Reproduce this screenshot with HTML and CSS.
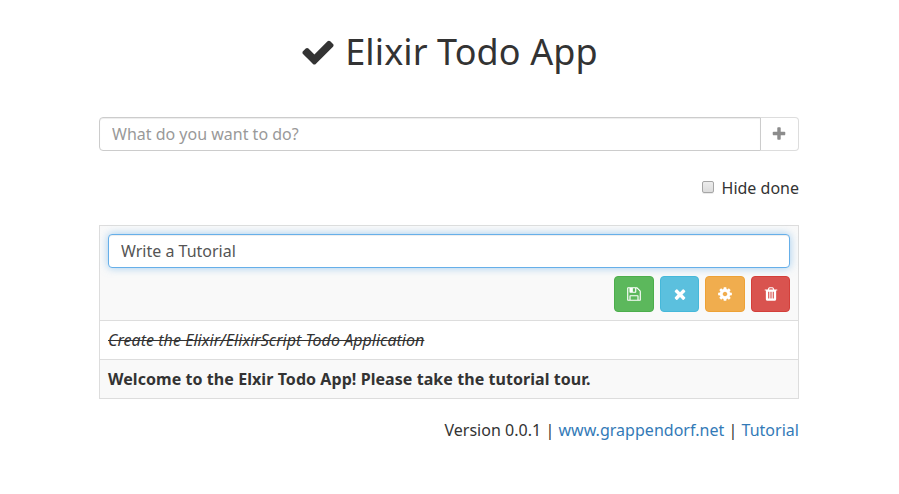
FILE: index.html
```html
<!DOCTYPE html>
<html lang="en">
<head>
<meta charset="utf-8">
<title>Elixir Todo App</title>
<link rel="stylesheet" href="styles.css">
</head>
<body>
<main class="container">
  <h1 class="title">
    <svg class="title-icon" viewBox="0 0 1792 1792"><path d="M1671 566q0 40-28 68l-724 724-136 136q-28 28-68 28t-68-28l-136-136-362-362q-28-28-28-68t28-68l136-136q28-28 68-28t68 28l294 295 656-657q28-28 68-28t68 28l136 136q28 28 28 68z"/></svg>
    <span>Elixir Todo App</span>
  </h1>
  <form class="new-todo">
    <input class="field new-field" type="text" placeholder="What do you want to do?">
    <button class="add" type="button" aria-label="Add"><svg class="icon" viewBox="0 0 1792 1792"><path d="M1600 736v192q0 40-28 68t-68 28h-416v416q0 40-28 68t-68 28h-192q-40 0-68-28t-28-68v-416h-416q-40 0-68-28t-28-68v-192q0-40 28-68t68-28h416v-416q0-40 28-68t68-28h192q40 0 68 28t28 68v416h416q40 0 68 28t28 68z"/></svg></button>
  </form>
  <label class="filter"><input class="check" type="checkbox"><span>Hide done</span></label>
  <ul class="todos">
    <li class="todo editing">
      <input class="field edit-field" type="text" value="Write a Tutorial">
      <div class="actions">
        <button class="btn save" type="button" aria-label="Save"><svg class="icon" viewBox="0 0 1792 1792"><path d="M512 1536h768v-384h-768v384zm896 0h128v-896q0-14-10-38.5t-20-34.5l-281-281q-10-10-34-20t-39-10v416q0 40-28 68t-68 28h-576q-40 0-68-28t-28-68v-416h-128v1280h128v-416q0-40 28-68t68-28h832q40 0 68 28t28 68v416zm-384-928v-320q0-13-9.5-22.5t-22.5-9.5h-192q-13 0-22.5 9.5t-9.5 22.5v320q0 13 9.5 22.5t22.5 9.5h192q13 0 22.5-9.5t9.5-22.5zm640 32v928q0 40-28 68t-68 28h-1344q-40 0-68-28t-28-68v-1344q0-40 28-68t68-28h928q40 0 88 20t76 48l280 280q28 28 48 76t20 88z"/></svg></button>
        <button class="btn cancel" type="button" aria-label="Cancel"><svg class="icon" viewBox="0 0 1792 1792"><path d="M1490 1322q0 40-28 68l-136 136q-28 28-68 28t-68-28l-294-294-294 294q-28 28-68 28t-68-28l-136-136q-28-28-28-68t28-68l294-294-294-294q-28-28-28-68t28-68l136-136q28-28 68-28t68 28l294 294 294-294q28-28 68-28t68 28l136 136q28 28 28 68t-28 68l-294 294 294 294q28 28 28 68z"/></svg></button>
        <button class="btn settings" type="button" aria-label="Settings"><svg class="icon" viewBox="0 0 1792 1792"><path d="M1152 896q0-106-75-181t-181-75-181 75-75 181 75 181 181 75 181-75 75-181zm512-109v222q0 12-8 23t-20 13l-185 28q-19 54-39 91 35 50 107 138 10 12 10 25t-9 23q-27 37-99 108t-94 71q-12 0-26-9l-138-108q-44 23-91 38-16 136-29 186-7 28-36 28h-222q-14 0-24.500-8.500t-11.500-21.500l-28-184q-49-16-90-37l-141 107q-10 9-25 9-14 0-25-11-126-114-165-168-7-10-7-23 0-12 8-23 15-21 51-66.500t54-70.500q-27-50-41-99l-183-27q-13-2-21-12.500t-8-23.500v-222q0-12 8-23t19-13l186-28q14-46 39-92-40-57-107-138-10-12-10-24 0-10 9-23 26-36 98.500-107.500t94.500-71.500q13 0 26 10l138 107q44-23 91-38 16-136 29-186 7-28 36-28h222q14 0 24.500 8.500t11.500 21.500l28 184q49 16 90 37l142-107q9-9 24-9 13 0 25 10 129 119 165 170 7 8 7 22 0 12-8 23-15 21-51 66.500t-54 70.500q26 50 41 98l183 28q13 2 21 12.500t8 23.500z"/></svg></button>
        <button class="btn delete" type="button" aria-label="Delete"><svg class="icon" viewBox="0 0 1792 1792"><path d="M704 1376v-704q0-14-9-23t-23-9h-64q-14 0-23 9t-9 23v704q0 14 9 23t23 9h64q14 0 23-9t9-23zm256 0v-704q0-14-9-23t-23-9h-64q-14 0-23 9t-9 23v704q0 14 9 23t23 9h64q14 0 23-9t9-23zm256 0v-704q0-14-9-23t-23-9h-64q-14 0-23 9t-9 23v704q0 14 9 23t23 9h64q14 0 23-9t9-23zm-544-992h448l-48-117q-7-9-17-11h-317q-10 2-17 11zm928 32v64q0 14-9 23t-23 9h-96v948q0 83-47 143.500t-113 60.500h-832q-66 0-113-58.500t-47-141.500v-952h-96q-14 0-23-9t-9-23v-64q0-14 9-23t23-9h309l70-167q15-37 54-63t79-26h320q40 0 79 26t54 63l70 167h309q14 0 23 9t9 23z"/></svg></button>
      </div>
    </li>
    <li class="todo done">Create the Elixir/ElixirScript Todo Application</li>
    <li class="todo important">Welcome to the Elxir Todo App! Please take the tutorial tour.</li>
  </ul>
  <footer class="footer">Version 0.0.1 | <a href="#">www.grappendorf.net</a> | <a href="#">Tutorial</a></footer>
</main>
</body>
</html>
```
FILE: styles.css
```css
* { box-sizing: border-box; }

body {
  margin: 0;
  background: #fff;
  color: #333;
  font: 16px/22px "Noto Sans", sans-serif;
}

.container { width: 700px; margin: 0 auto 0 99px; }

.title {
  display: flex;
  justify-content: center;
  align-items: center;
  gap: 9px;
  height: 40px;
  margin: 32px 0 45px;
  font-size: 36px;
  font-weight: 400;
  line-height: 40px;
  letter-spacing: .1px;
}

.title-icon { width: 36px; height: 36px; fill: currentColor; }
.icon { display: block; width: 16px; height: 16px; fill: currentColor; }

.new-todo { display: flex; }

.field {
  height: 34px;
  padding: 6px 12px;
  border: 1px solid #ccc;
  border-radius: 4px;
  outline: 0;
  background: #fff;
  color: #555;
  font: inherit;
  box-shadow: inset 0 1px 1px rgba(0, 0, 0, .075);
}

.field::placeholder { color: #999; opacity: 1; }

.new-field { width: 662px; border-radius: 4px 0 0 4px; }

.add {
  display: flex;
  justify-content: center;
  align-items: center;
  width: 38px;
  height: 34px;
  padding: 0 1px 0 0;
  border: 1px solid #ddd;
  border-left: 0;
  border-radius: 0 4px 4px 0;
  background: #fff;
  color: #8c8c8c;
}

.filter {
  display: flex;
  justify-content: flex-end;
  align-items: center;
  gap: 8px;
  margin: 26px 0;
}

.check {
  appearance: none;
  width: 12px;
  height: 12px;
  margin: 0 0 2px;
  border: 1px solid #a6a6a6;
  border-radius: 2px;
  background: linear-gradient(#ededed, #dcdcdc);
  box-shadow: 0 1px 0 rgba(0, 0, 0, .08);
}

.todos {
  margin: 0;
  padding: 0;
  border: 1px solid #ddd;
  list-style: none;
}

.todo { padding: 8px; }
.todo + .todo { border-top: 1px solid #ddd; }
.todo:nth-child(odd) { background: #f9f9f9; }
.editing { height: 94px; }

.edit-field {
  display: block;
  width: 100%;
  border-color: #66afe9;
  box-shadow: inset 0 1px 1px rgba(0, 0, 0, .075), 0 0 8px rgba(102, 175, 233, .6);
}

.actions {
  display: grid;
  grid-template-columns: 40px 39px 40px 39px;
  justify-content: end;
  gap: 6px;
  margin-top: 8px;
}

.btn {
  display: flex;
  justify-content: center;
  align-items: center;
  height: 36px;
  padding: 0;
  border: 1px solid;
  border-radius: 4px;
}

.btn .icon { color: #fff; }
.save { background: #5cb85c; border-color: #4cae4c; }
.cancel { background: #5bc0de; border-color: #46b8da; }
.settings { background: #f0ad4e; border-color: #eea236; }
.delete { background: #d9534f; border-color: #d43f3a; }

.done { font-style: italic; text-decoration: line-through; letter-spacing: .04px; }
.important { font-weight: 700; letter-spacing: .065px; }

.footer { margin-top: 20px; text-align: right; letter-spacing: .025px; }
.footer a { color: #337ab7; text-decoration: none; }
```
